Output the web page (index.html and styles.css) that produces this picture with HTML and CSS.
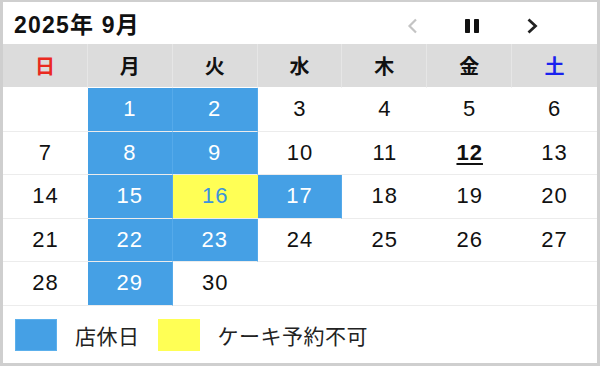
FILE: index.html
```html
<!DOCTYPE html>
<html lang="ja">
<head>
<meta charset="utf-8">
<title>2025年 9月</title>
<link rel="stylesheet" href="styles.css">
</head>
<body>
<div class="cal">
  <div class="head">
    <h1 class="title">2025年 9月</h1>
    <div class="nav">
      <span class="nav-btn prev"><svg width="12" height="16" viewBox="0 0 12 16"><path d="M10 1.5 L3.5 8 L10 14.5" fill="none" stroke="#c4c4c4" stroke-width="2.2"/></svg></span>
      <span class="nav-btn pause"><svg width="14" height="14" viewBox="0 0 14 14"><rect x="0" y="0" width="5" height="14" rx="0.8" fill="#111"/><rect x="9" y="0" width="5" height="14" rx="0.8" fill="#111"/></svg></span>
      <span class="nav-btn next"><svg width="13" height="16" viewBox="0 0 13 16"><path d="M2.5 1.5 L9.5 8 L2.5 14.5" fill="none" stroke="#222" stroke-width="2.8"/></svg></span>
    </div>
  </div>
  <div class="grid">
    <div class="wd sun">日</div>
    <div class="wd">月</div>
    <div class="wd">火</div>
    <div class="wd">水</div>
    <div class="wd">木</div>
    <div class="wd">金</div>
    <div class="wd sat last">土</div>

    <div class="day"></div>
    <div class="day off">1</div>
    <div class="day off">2</div>
    <div class="day">3</div>
    <div class="day">4</div>
    <div class="day">5</div>
    <div class="day">6</div>

    <div class="day">7</div>
    <div class="day off">8</div>
    <div class="day off">9</div>
    <div class="day">10</div>
    <div class="day">11</div>
    <div class="day today">12</div>
    <div class="day">13</div>

    <div class="day">14</div>
    <div class="day off">15</div>
    <div class="day nocake">16</div>
    <div class="day off">17</div>
    <div class="day">18</div>
    <div class="day">19</div>
    <div class="day">20</div>

    <div class="day">21</div>
    <div class="day off">22</div>
    <div class="day off">23</div>
    <div class="day">24</div>
    <div class="day">25</div>
    <div class="day">26</div>
    <div class="day">27</div>

    <div class="day">28</div>
    <div class="day off">29</div>
    <div class="day">30</div>
    <div class="day"></div>
    <div class="day"></div>
    <div class="day"></div>
    <div class="day"></div>
  </div>
  <div class="legend">
    <span class="swatch blue"></span><span class="label">店休日</span>
    <span class="swatch yellow"></span><span class="label">ケーキ予約不可</span>
  </div>
</div>
</body>
</html>
```
FILE: styles.css
```css
* { box-sizing: border-box; }
html, body { margin: 0; padding: 0; background: #fff; }
body {
  font-family: "Liberation Sans", "Noto Sans CJK JP", sans-serif;
  color: #111;
}
.cal {
  width: 600px;
  height: 366px;
  border: 3px solid #cfcfcf;
  border-top-width: 2px;
  background: #fff;
  display: flex;
  flex-direction: column;
}
.head {
  height: 42px;
  display: flex;
  align-items: center;
  padding-left: 11px;
}
.title {
  margin: 0;
  font-size: 23px;
  font-weight: bold;
  letter-spacing: 1.2px;
  color: #111;
  font-family: "Liberation Sans", "Noto Sans CJK JP", sans-serif;
}
.nav {
  margin-left: auto;
  margin-right: 35px;
  display: flex;
  padding-top: 5px;
}
.nav-btn {
  width: 60px;
  display: flex;
  justify-content: center;
  align-items: center;
  height: 20px;
}
.grid {
  display: grid;
  grid-template-columns: repeat(7, 1fr);
  grid-template-rows: 44px repeat(5, 43.5px);
}
.wd {
  background: #dcdcdc;
  border-right: 1px solid #e6e6e6;
  border-bottom: 1px solid #fff;
  display: flex;
  align-items: center;
  justify-content: center;
  font-family: "Noto Sans CJK JP", sans-serif;
  font-weight: bold;
  font-size: 20px;
  color: #111;
}
.wd.last { border-right: none; }
.wd.sun { color: #ea2a1f; }
.wd.sat { color: #1a22ee; }
.day {
  border-bottom: 1.5px solid #ececec;
  display: flex;
  align-items: center;
  justify-content: center;
  font-size: 22px;
  letter-spacing: 1px;
  color: #111;
}
.day.off {
  background: #45a0e5;
  color: #fff;
  border-right: 1px solid #55aaea;
}
.day.nocake {
  background: #ffff55;
  color: #3c93dc;
}
.day.today {
  font-weight: bold;
  text-decoration: underline;
  text-decoration-thickness: 2px;
  text-underline-offset: 3px;
}
.legend {
  flex: 1;
  display: flex;
  align-items: center;
  padding-left: 12px;
  padding-top: 2px;
}
.swatch {
  width: 42px;
  height: 32px;
  margin-right: 18px;
}
.swatch.blue { background: #45a0e5; border: 1px solid #5cb0ec; }
.swatch.yellow { background: #ffff55; }
.label {
  font-family: "Noto Sans CJK JP", sans-serif;
  font-size: 21px;
  letter-spacing: 0.5px;
  color: #222;
  margin-right: 18px;
}
```
